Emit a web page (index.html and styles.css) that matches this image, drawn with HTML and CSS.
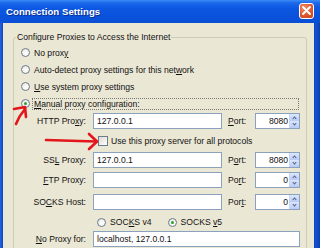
FILE: index.html
```html
<!DOCTYPE html>
<html lang="en">
  <head>
    <meta charset="UTF-8" />
    <title>Connection Settings</title>
    <link rel="stylesheet" href="styles.css">
  </head>
  <body>
    <div class="window">
      <header class="titlebar">
        <h1>Connection Settings</h1>
        <button class="close" aria-label="Close">
          <svg width="9" height="9" viewBox="0 0 9 9">
            <path d="M1 1 L8 8 M8 1 L1 8" stroke="#fff" stroke-width="1.8" stroke-linecap="round" />
          </svg>
        </button>
      </header>

      <div class="frame">
        <fieldset class="group">
          <legend>Configure Proxies to Access the Internet</legend>

          <div class="opt"><span class="radio"></span><span class="txt">No prox<u>y</u></span></div>
          <div class="opt"><span class="radio"></span><span class="txt">Auto-detect proxy settings for this net<u>w</u>ork</span></div>
          <div class="opt"><span class="radio"></span><span class="txt"><u>U</u>se system proxy settings</span></div>
          <div class="opt"><span class="radio on"></span><span class="txt focus"><u>M</u>anual proxy configuration:</span></div>

          <div class="row first">
            <label>HTTP Pro<u>x</u>y:</label>
            <span class="field">127.0.0.1</span>
            <label class="port"><u>P</u>ort:</label>
            <span class="spin">8080<i class="up"></i><i class="down"></i></span>
          </div>

          <div class="check"><span class="box"></span><span>Use this proxy server for all protocols</span></div>

          <div class="row ssl">
            <label>SS<u>L</u> Proxy:</label>
            <span class="field">127.0.0.1</span>
            <label class="port">P<u>o</u>rt:</label>
            <span class="spin">8080<i class="up"></i><i class="down"></i></span>
          </div>

          <div class="row ftp">
            <label><u>F</u>TP Proxy:</label>
            <span class="field"></span>
            <label class="port">Po<u>r</u>t:</label>
            <span class="spin">0<i class="up"></i><i class="down"></i></span>
          </div>

          <div class="row host">
            <label>SO<u>C</u>KS Host:</label>
            <span class="field"></span>
            <label class="port">Por<u>t</u>:</label>
            <span class="spin">0<i class="up"></i><i class="down"></i></span>
          </div>

          <div class="socks">
            <span class="opt2"><span class="radio"></span><span>SOC<u>K</u>S v4</span></span>
            <span class="opt2 v5"><span class="radio on"></span><span>SOCKS <u>v</u>5</span></span>
          </div>

          <div class="row noproxy">
            <label><u>N</u>o Proxy for:</label>
            <span class="field wide">localhost, 127.0.0.1</span>
          </div>
        </fieldset>
      </div>

      <!-- red arrows drawn over the dialog -->
      <svg class="marks" width="320" height="248" viewBox="0 0 320 248">
        <g stroke="#e2161b" stroke-width="2.6" fill="none" stroke-linecap="round" stroke-linejoin="round">
          <path d="M16 124 Q19 116 25 109" />
          <path d="M14 109 L25 107 L26 117" />
          <path d="M46 140 L96 141.5" />
          <path d="M89 134 L97 141.5 L89 149" />
        </g>
      </svg>
    </div>
  </body>
</html>
```

FILE: styles.css
```css
body {
  margin: 0;
  background-color: #0b4ed3;
}

.window {
  position: relative;
  width: 320px;
  height: 248px;
  overflow: hidden;
  display: flex;
  flex-direction: column;
  background: linear-gradient(90deg, #2a64d8 0, #0a46c8 3px, #0a46c8 314px, #1650cc 316px, #0a3fb4 320px);
  font-family: "Liberation Sans", Arial, sans-serif;
  font-size: 8.6px;
  color: #111;
}

.titlebar {
  height: 23px;
  flex-shrink: 0;
  display: flex;
  align-items: center;
  justify-content: space-between;
  padding: 0 6px 0 6px;
  background: linear-gradient(180deg, #3b8cf5 0, #1c67ea 3px, #0d58e2 8px, #0a52dc 16px, #0a4fd4 23px);
}

.titlebar h1 {
  margin: 0;
  font-size: 9.6px;
  font-weight: bold;
  color: #fff;
  letter-spacing: 0.05px;
  text-shadow: 1px 1px 0 #0a2f8f;
}

.close {
  width: 15px;
  height: 16px;
  padding: 0;
  margin-top: -2px;
  border: 1px solid #fff;
  border-radius: 3px;
  background: radial-gradient(circle at 35% 30%, #f0906a 0, #e05a32 50%, #c8401c 100%);
  display: flex;
  align-items: center;
  justify-content: center;
}

.frame {
  flex: 1;
  margin: 0 6px 0 3px;
  padding: 9px 7px 0 10px;
  background-color: #ebe7d5;
}

.group {
  margin: 0;
  padding: 1px 0 0 0;
  border: 1px solid #cfcbb8;
  border-radius: 3px;
  height: 240px;
}

.group legend {
  margin-left: 2px;
  padding: 0 1px;
  line-height: 10px;
}

.opt {
  display: flex;
  align-items: center;
  height: 17px;
  padding-left: 7px;
}

.opt:first-of-type {
  margin-top: 1px;
}

.radio {
  width: 7px;
  height: 7px;
  border: 1px solid #6d7b8e;
  border-radius: 50%;
  background: radial-gradient(circle at 60% 65%, #ffffff 0, #f2f0ea 60%, #d7d4cc 100%);
  position: relative;
  flex-shrink: 0;
}

.radio.on::after {
  content: "";
  position: absolute;
  left: 2px;
  top: 2px;
  width: 3px;
  height: 3px;
  border-radius: 50%;
  background-color: #2aa02a;
}

.txt {
  margin-left: 2px;
  padding: 0 1px;
  line-height: 10px;
  border: 1px dotted transparent;
}

.txt.focus {
  flex: 1;
  margin-right: 7px;
  border-color: #777;
}

.row {
  display: grid;
  grid-template-columns: 79px 135px 27px 45px;
  align-items: center;
  height: 16px;
  margin-top: 2px;
}

.row.first {
  margin-top: 1px;
}

.row.ssl {
  margin-top: 3px;
}

.row.ftp {
  margin-top: 4px;
}

.row.host {
  margin-top: 6px;
}

.row.noproxy {
  margin-top: 1px;
}

.row label {
  text-align: right;
  padding-right: 7px;
}

.row label.port {
  text-align: left;
  padding-right: 0;
}

.field,
.spin {
  box-sizing: border-box;
  height: 16px;
  line-height: 14px;
  border: 1px solid #8aa2bd;
  background-color: #fff;
  padding-left: 3px;
}

.field {
  width: 129px;
}

.field.wide {
  width: 207px;
  grid-column: 2 / 5;
}

.spin {
  position: relative;
  text-align: right;
  padding-right: 11px;
}

.spin i {
  position: absolute;
  right: 0;
  width: 9px;
  height: 7px;
  background: linear-gradient(180deg, #dce7fd, #b8cbf6);
  border-left: 1px solid #c9d6f2;
}

.spin .up {
  top: 0;
}

.spin .down {
  bottom: 0;
}

.spin i::after {
  content: "";
  position: absolute;
  left: 3px;
  width: 2px;
  height: 2px;
  border-left: 1px solid #4d6185;
  border-top: 1px solid #4d6185;
}

.spin .up::after {
  top: 3px;
  transform: rotate(45deg);
}

.spin .down::after {
  top: 1px;
  transform: rotate(225deg);
}

.check {
  display: flex;
  align-items: center;
  gap: 3px;
  height: 17px;
  padding-left: 84px;
  margin-top: 3px;
}

.box {
  width: 8px;
  height: 8px;
  border: 1px solid #6d7b8e;
  background: linear-gradient(135deg, #dcdad2, #ffffff);
}

.socks {
  display: flex;
  align-items: center;
  height: 16px;
  margin-top: 4px;
  padding-left: 83px;
}

.opt2 {
  display: flex;
  align-items: center;
  gap: 4px;
}

.opt2.v5 {
  margin-left: 16px;
}

.marks {
  position: absolute;
  left: 0;
  top: 0;
  pointer-events: none;
}
```
